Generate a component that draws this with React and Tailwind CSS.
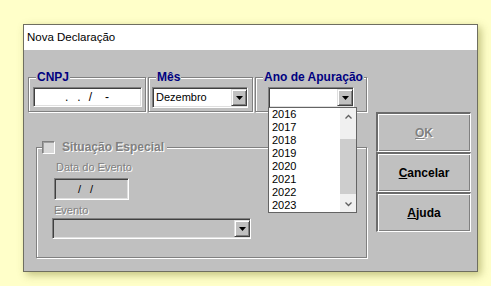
import React from 'react';

const YEARS = ['2016', '2017', '2018', '2019', '2020', '2021', '2022', '2023'];

const sunken =
  'border border-t-[#808080] border-l-[#808080] border-b-white border-r-white shadow-[inset_1px_1px_0_#404040,inset_-1px_-1px_0_#dfdfdf]';
const etched = 'border border-[#808080] shadow-[inset_1px_1px_0_#fff,1px_1px_0_#fff]';
const disabledText = 'text-[#808080] [text-shadow:1px_1px_0_#fff]';

const ArrowBtn = () => (
  <div className="flex h-[17px] w-[16px] items-center justify-center border border-t-[#dfdfdf] border-l-[#dfdfdf] border-b-[#404040] border-r-[#404040] bg-[#c0c0c0] shadow-[inset_1px_1px_0_#fff,inset_-1px_-1px_0_#808080]">
    <svg width="7" height="4" viewBox="0 0 7 4">
      <path d="M0 0h7L3.5 4z" fill="#000" />
    </svg>
  </div>
);

const GroupBox = ({ label, className, children }) => (
  <div className={`mt-[6px] h-[35px] ${etched} ${className}`}>
    <div className="-mt-[7px] ml-[7px] w-fit bg-[#c0c0c0] px-[1px] text-[12px] font-bold leading-[13px] text-[#000080]">
      {label}
    </div>
    {children}
  </div>
);

const Chevron = ({ up }) => (
  <svg width="7" height="5" viewBox="0 0 7 5">
    <path d={up ? 'M0.5 4.5L3.5 1.5L6.5 4.5' : 'M0.5 0.5L3.5 3.5L6.5 0.5'} stroke="#606060" strokeWidth="1.3" fill="none" />
  </svg>
);

const WinButton = ({ disabled, children }) => (
  <div
    className={`flex h-[40px] w-[95px] items-center justify-center border-t-2 border-l-2 border-b border-r border-t-[#6b6b6b] border-l-[#6b6b6b] border-b-white border-r-white bg-[#c0c0c0] text-[12px] font-bold shadow-[inset_1px_1px_0_#fff,inset_-1px_-1px_0_#808080] ${
      disabled ? disabledText : 'text-black'
    }`}
  >
    {children}
  </div>
);

export default function App() {
  return (
    <div className="min-h-[286px] w-[491px] bg-[#ffffc9] pl-[23px] pt-[24px] font-['Liberation_Sans',Arial,sans-serif]">
      <div className="flex h-[248px] w-[455px] flex-col border border-[#6e6e60] shadow-[3px_3px_8px_rgba(120,120,40,0.45)]">
        <div className="flex h-[25px] items-center bg-white pl-[3px] text-[11.5px] text-black">Nova Declaração</div>

        <div className="flex flex-1 bg-[#c0c0c0] pl-[4px] pt-[21px]">
          {/* left column */}
          <div className="flex w-[339px] flex-col">
            <div className="flex gap-[2px]">
              <GroupBox label="CNPJ" className="w-[118px]">
                <div className={`ml-[4px] mt-[3px] flex h-[20px] w-[109px] items-center bg-white text-[12px] text-black ${sunken}`}>
                  <span className="ml-[31px]">.</span>
                  <span className="ml-[9px]">.</span>
                  <span className="ml-[8px]">/</span>
                  <span className="ml-[13px]">-</span>
                </div>
              </GroupBox>
              <GroupBox label="Mês" className="w-[105px]">
                <div className={`ml-[3px] mt-[3px] flex h-[21px] w-[96px] items-center justify-between bg-white pl-[3px] text-[11px] text-black ${sunken}`}>
                  <span>Dezembro</span>
                  <ArrowBtn />
                </div>
              </GroupBox>
              <GroupBox label="Ano de Apuração" className="w-[112px]">
                <div className={`relative ml-[12px] mt-[3px] flex h-[21px] w-[86px] items-center justify-end bg-white ${sunken}`}>
                  <ArrowBtn />
                  <div className="absolute left-[-1px] top-[19px] z-10 flex h-[106px] w-[89px] border border-[#646464] bg-white">
                    <div className="flex-1 pl-[3px]">
                      {YEARS.map((y) => (
                        <div key={y} className="text-[11px] leading-[13px] text-black">
                          {y}
                        </div>
                      ))}
                    </div>
                    <div className="flex w-[16px] flex-col bg-[#f0f0f0]">
                      <div className="flex h-[17px] items-center justify-center">
                        <Chevron up />
                      </div>
                      <div className="mt-[14px] h-[55px] bg-[#cdcdcd]" />
                      <div className="flex flex-1 items-end justify-center pb-[5px]">
                        <Chevron />
                      </div>
                    </div>
                  </div>
                </div>
              </GroupBox>
            </div>

            {/* Situação Especial */}
            <div className={`ml-[8px] mt-[35px] flex h-[111px] w-[331px] flex-col ${etched}`}>
              <div className="-mt-[7px] ml-[5px] flex w-fit items-center bg-[#c0c0c0] pr-[3px]">
                <div className="h-[13px] w-[13px] border border-t-[#808080] border-l-[#808080] border-b-white border-r-white bg-[#d8d8d8] shadow-[inset_1px_1px_0_#a0a0a0]" />
                <span className={`ml-[7px] text-[12px] font-bold leading-[13px] ${disabledText}`}>Situação Especial</span>
              </div>
              <div className={`ml-[19px] mt-[6px] text-[11px] leading-[14px] ${disabledText}`}>Data do Evento</div>
              <div className={`ml-[17px] mt-[4px] flex h-[22px] w-[75px] items-center bg-[#c0c0c0] text-[11px] text-black ${sunken}`}>
                <span className="ml-[23px]">/</span>
                <span className="ml-[9px]">/</span>
              </div>
              <div className={`ml-[17px] mt-[3px] text-[11px] leading-[14px] ${disabledText}`}>Evento</div>
              <div className={`ml-[15px] mt-[1px] flex h-[21px] w-[199px] items-center justify-end bg-[#c0c0c0] ${sunken}`}>
                <ArrowBtn />
              </div>
            </div>
          </div>

          {/* buttons */}
          <div className="ml-[9px] mt-[41px] flex flex-col">
            <WinButton disabled>
              <span><span className="underline">O</span>K</span>
            </WinButton>
            <WinButton>
              <span><span className="underline">C</span>ancelar</span>
            </WinButton>
            <WinButton>
              <span><span className="underline">A</span>juda</span>
            </WinButton>
          </div>
        </div>
      </div>
    </div>
  );
}
